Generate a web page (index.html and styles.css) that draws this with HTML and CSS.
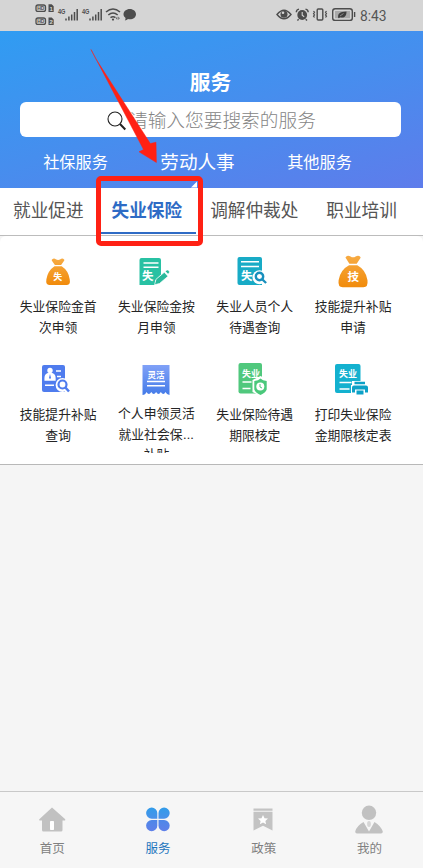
FILE: index.html
```html
<!DOCTYPE html>
<html lang="zh-CN">
<head>
<meta charset="utf-8">
<meta name="viewport" content="width=device-width, initial-scale=1">
<title>服务</title>
<link rel="stylesheet" href="styles.css">
</head>
<body>
<div class="status">
  <svg class="status-left" width="104" height="24" viewBox="34 2 104 24">
    <g fill="none" stroke="#4d4d4d" stroke-width="1.3">
      <rect x="36" y="5" width="9.5" height="6.4" rx="2"/>
      <rect x="36" y="18" width="9.5" height="6.4" rx="2"/>
    </g>
    <path d="M48.5 4.3h3.2l2 2v5.6h-5.2zM48.5 17.5h3.2l2 2v5.5h-5.2z" fill="#4d4d4d"/>
    <g class="tiny" fill="#4d4d4d">
      <text x="37.2" y="10.4" textLength="7.2" lengthAdjust="spacingAndGlyphs">HD</text><text x="37.2" y="23.4" textLength="7.2" lengthAdjust="spacingAndGlyphs">HD</text>
      <text class="network" x="58" y="13.8" textLength="7.500" lengthAdjust="spacingAndGlyphs">4G</text><text class="network" x="82" y="13.8" textLength="7.500" lengthAdjust="spacingAndGlyphs">4G</text>
    </g>
    <g class="tiny" fill="#d5d5d5"><text x="49.4" y="10.7">1</text><text x="49.4" y="23.7">2</text></g>
    <path d="M66 20.500v-2M68.900 20.500v-4M71.700 20.500v-6M74.500 20.500v-8.500M77.200 20.500v-11.500M90 20.500v-2M92.900 20.500v-4M95.700 20.500v-6M98.500 20.500v-8.500M101.200 20.500v-11.500" stroke="#4d4d4d" stroke-width="1.5"/>
    <g fill="none" stroke="#4d4d4d" stroke-width="1.5">
      <path d="M106 12q7-6 14 0M108.300 15q4.700-4 9.400 0M110.500 17.700q2.500-2 5 0"/>
    </g>
    <circle cx="113" cy="19.600" r="1.100" fill="#4d4d4d"/>
    <path d="M117.300 16.500l-1.300 1.700 1.300 1.700zM118.400 16.500l1.300 1.700-1.300 1.700z" fill="#4d4d4d"/>
    <path d="M129.800 9c3.500 0 6.200 2.300 6.200 5.300s-2.800 5-6 5c-.7 0-1.400 0-2-.3-.8.800-2.100 1.400-3.200 1.400.7-.8.900-1.800.6-2.600-1.200-.9-1.900-2.100-1.900-3.500 0-3 2.800-5.300 6.300-5.300z" fill="#4d4d4d"/>
  </svg>
  <svg class="status-right" width="80" height="18" viewBox="276 6 80 18">
    <path d="M277 14.500q7-8.500 14 0q-7 8.500-14 0z" fill="none" stroke="#4d4d4d" stroke-width="1.400"/>
    <circle cx="284" cy="14.300" r="3.500" fill="#4d4d4d"/><circle cx="283" cy="12.800" r="1.300" fill="#d5d5d5"/>
    <circle cx="302.200" cy="15" r="4.900" fill="#4d4d4d"/>
    <path d="M296.300 12.200q0-2.500 2.700-3.100M308.200 12.200q0-2.500-2.700-3.100M298.700 19.200l-1.300 1.300M305.700 19.200l1.300 1.300" stroke="#4d4d4d" stroke-width="1.400" fill="none"/>
    <path d="M302.200 12v3.200l2 1.500" stroke="#d5d5d5" stroke-width="1.100" fill="none"/>
    <rect x="317.200" y="9" width="5.600" height="11" rx="1" fill="none" stroke="#4d4d4d" stroke-width="1.400"/>
    <path d="M313.500 11l1 1.300-1 1.300 1 1.300-1 1.300 1 1.300M326.500 11l-1 1.300 1 1.300-1 1.300 1 1.300-1 1.300" stroke="#4d4d4d" stroke-width="1.200" fill="none"/>
    <rect x="332.700" y="8.800" width="19.600" height="11.600" rx="2.500" fill="none" stroke="#4d4d4d" stroke-width="1.400"/>
    <rect x="335" y="11" width="15" height="7.200" fill="#aaa"/>
    <path d="M354.600 12v5" stroke="#4d4d4d" stroke-width="1.400"/>
    <path d="M338.300 18c-.8-4.300 1.300-6.300 8.200-6.500 0 5-2.600 7-6.500 5.700l-1 1z" fill="#3f3f3f"/><path d="M340 16l3.500-2.500" stroke="#aaa" stroke-width=".7"/>
  </svg>
  <span class="clock">8:43</span>
</div>

<header class="hero">
  <h1>服务</h1>
  <div class="search">
    <svg width="20" height="20" viewBox="0 0 20 20" fill="none" stroke="#222"><circle cx="8" cy="8" r="7" stroke-width="1.100"/><path d="M13 13l5.300 5.500" stroke-width="2"/></svg>
    <span>请输入您要搜索的服务</span>
  </div>
  <nav class="groups"><span>社保服务</span><span class="current">劳动人事</span><span>其他服务</span></nav>
</header>

<nav class="tabs">
  <span>就业促进</span><span class="active">失业保险</span><span>调解仲裁处</span><span>职业培训</span>
</nav>

<main class="services">
  <a class="service">
    <svg viewBox="0 0 36 36"><defs><linearGradient id="bag" x1="0" y1="0" x2="0" y2="1"><stop offset="0" stop-color="#f7ab43"/><stop offset="1" stop-color="#f18b0b"/></linearGradient></defs>
      <path fill="url(#bag)" d="M12 5.500q2-2 3.800-.3q2.300 1.400 4.600 0q2-1.700 3.700.3q.6.500 0 1.200l-3 4.300h-6.200l-3-4.300q-.5-.7.100-1.200zM14.500 12.300h7.200q6.800 4.400 8 13q1 5.600-2.700 5.600H9.200q-3.700 0-2.800-5.600q1.400-8.600 8.100-13z"/>
      <text class="glyph nine" x="13.300" y="26">失</text></svg>
    <span class="label">失业保险金首次申领</span>
  </a>
  <a class="service">
    <svg viewBox="0 0 36 36"><path fill="#28c1a3" d="M3.500 4h17.500q2 0 2 2v14.500l-6 6v4.500h-15.500V6q0-2 2-2z"/><path d="M5.500 9h15M5.500 13.200h15" stroke="#fff" stroke-width="1.400"/><text class="glyph eleven" x="4" y="26">失</text>
      <path d="M16.500 30.800l1.500-5.500 8.300-7 3.700 4-8.500 7.200zM27.300 17.400l1.300-1.200q1.300-.8 2.300.4q1.300 1.500.1 2.700l-1 .9z" fill="#28b99b" stroke="#fff" stroke-width=".7"/></svg>
    <span class="label">失业保险金按月申领</span>
  </a>
  <a class="service">
    <svg viewBox="0 0 36 36"><path fill="#18abc6" d="M2.500 3H23q2 0 2 2v26H2.500q-2 0-2-2V5q0-2 2-2z"/><path d="M4 7.800h18M4 12.500h18" stroke="#fff" stroke-width="1.400"/><text class="glyph eleven" x="4" y="26">失</text>
      <circle cx="22.500" cy="23.300" r="7" fill="#fff"/><path d="M26 27l4 3.500" stroke="#fff" stroke-width="5"/><circle cx="22.500" cy="22.500" r="3.700" fill="none" stroke="#178fbd" stroke-width="2.400"/><path d="M25.400 25.500l3.700 3.500" stroke="#178fbd" stroke-width="2.400"/></svg>
    <span class="label">失业人员个人待遇查询</span>
  </a>
  <a class="service">
    <svg viewBox="0 0 36 36"><path fill="url(#bag)" d="M10.800 3q2-2.300 4.800-.5q2.400 1.700 5 0q3-1.700 4.800.5q.5.700-.1 1.300l-3.600 5.500h-7.300l-3.500-5.500q-.7-.6-.1-1.300zM14 11.300h8.300q8.700 4.700 10.200 15q.8 7-4.100 7H7.700q-5 0-4.100-7q1.500-10.300 10.400-15z"/>
      <text class="glyph eleven" x="12.500" y="27">技</text></svg>
    <span class="label">技能提升补贴申请</span>
  </a>
  <a class="service">
    <svg viewBox="0 0 36 36"><path fill="#4f7cee" d="M4 4h19q2 0 2 2v25H4q-2 0-2-2V6q0-2 2-2z"/><circle cx="10" cy="9.500" r="2.700" fill="#fff"/><path d="M5.200 19v-2q0-3.700 3.500-4.500h2.700q3.500.8 3.500 4.500v2zM16 10h5M17 15.500h4M5 24.200h9" fill="#fff" stroke="#fff" stroke-width="1.500"/><path d="M10 13l-1 4 1 1 1-1z" fill="#4f7cee"/>
      <circle cx="22.500" cy="24" r="6.900" fill="#fff"/><circle cx="22.500" cy="23.500" r="4" fill="none" stroke="#4f7cee" stroke-width="2.200"/><path d="M25.400 26.500l3.600 4" stroke="#4f7cee" stroke-width="2.500"/></svg>
    <span class="label">技能提升补贴查询</span>
  </a>
  <a class="service">
    <svg viewBox="0 0 36 36"><defs><linearGradient id="bill" x1="0" y1="0" x2="0" y2="1"><stop offset="0" stop-color="#80a1f7"/><stop offset="1" stop-color="#447be8"/></linearGradient></defs><path fill="url(#bill)" d="M4.500 4h27v30q-2.500 0-4-3q-2 4-4.700 0q-2.300 4-4.700 0q-2.400 4-4.800 0q-2.500 4-4.800 0q-1.200 3-4 3z"/><text class="glyph eight" x="9.500" y="16.500">灵活</text><path d="M9 20.500h18M9 24.700h18" stroke="#fff" stroke-width="1.500"/></svg>
    <span class="label clipped">个人申领灵活<br>就业社会保<span class="dots">…</span><br>补贴</span>
  </a>
  <a class="service">
    <svg viewBox="0 0 36 36"><path fill="#50c87d" d="M3.500 2H23q2 0 2 2v28.500H3.500q-2 0-2-2V4q0-2 2-2z"/><text class="glyph nine" x="5" y="15.500">失业</text><path d="M5.500 21h9M5.500 27.500h8" stroke="#fff" stroke-width="1.500"/>
      <path d="M23.500 15l8 4v12l-8 4-8-4V19z" fill="#fff"/><path d="M23.500 17.500q2 2 6.200 2.500v8.500q-1 3-6.200 5.500q-5.200-2.500-6.200-5.500V20q4.200-.5 6.200-2.500z" fill="#4ac87b"/><circle cx="23.300" cy="25.500" r="4" fill="#fff"/><path d="M23 23v3l2 1" fill="none" stroke="#4ac87b"/></svg>
    <span class="label">失业保险待遇期限核定</span>
  </a>
  <a class="service">
    <svg viewBox="0 0 36 36"><path fill="#13b1cf" d="M2 3h21.500q2 0 2 2v27H2q-2 0-2-2V5q0-2 2-2z"/><text class="glyph nine" x="4" y="16">失业</text><path d="M4.500 21.500h12M4.500 28h10" stroke="#fff" stroke-width="1.500"/><path d="M17 20h15v4h2v10H16V24h1z" fill="#fff"/><path d="M19.500 20.800h10.500v2.400H19.500zM19 24.500h12q2 0 2 2v5h-3v-3H20v3h-3v-5q0-2 2-2zM21.500 29.500h7v4h-7z" fill="#0ca1c7"/></svg>
    <span class="label">打印失业保险金期限核定表</span>
  </a>
</main>

<nav class="bottom">
  <a><svg viewBox="0 0 32 32"><path d="M16 3.500L29 15q1 1.500-1 1.500h-1.500V26q0 1.500-1.500 1.500H7.500Q6 27.500 6 26v-9.500H4q-1.500 0-.7-1.300z" fill="#c1c1c1"/><rect x="14" y="17" width="4" height="9" rx=".7" fill="#fff"/></svg><span>首页</span></a>
  <a class="selected"><svg viewBox="0 0 32 32"><defs><linearGradient id="petal" x1="0" y1="0" x2="0" y2="1" ><stop offset="0" stop-color="#319ce9"/><stop offset="1" stop-color="#4991ea"/></linearGradient><linearGradient id="petal-low" x1="0" y1="0" x2="0" y2="1"><stop offset="0" stop-color="#4e87e8"/><stop offset="1" stop-color="#6080e9"/></linearGradient></defs><path fill="url(#petal)" d="M9.700 3.500a5.600 5.600 0 0 1 5.600 5.600v5.600H9.700a5.600 5.600 0 0 1 0-11.200zM22.100 3.500a5.600 5.600 0 0 1 0 11.200h-5.600V9.100a5.600 5.600 0 0 1 5.600-5.600z"/><path fill="url(#petal-low)" d="M9.700 16h5.600v5.700A5.600 5.600 0 1 1 9.700 16zM16.500 16h5.600a5.600 5.600 0 1 1-5.600 5.700z"/></svg><span>服务</span></a>
  <a><svg viewBox="0 0 32 32"><path d="M6.500 4.500h19v2.300h-19zM6.500 7.700h19V26.500L16 21.800l-9.500 4.700z" fill="#c3c3c3"/><path d="M16 11l1.500 3.200 3.500.4-2.600 2.300.7 3.400-3.100-1.700-3.100 1.700.7-3.400-2.600-2.300 3.500-.4z" fill="#fff"/></svg><span>政策</span></a>
  <a><svg viewBox="0 0 32 32"><circle cx="16" cy="8.800" r="7.200" fill="#c1c1c1"/><path d="M10.500 18l5.500 9.500L21.500 18q6.500 4 8.300 9.500 0 2-1.800 2H4q-1.800 0-1.800-2Q3.500 22 10.500 18z" fill="#c1c1c1"/><ellipse cx="16" cy="20" rx="1.900" ry="3" fill="#d6d6d6"/></svg><span>我的</span></a>
</nav>

<svg class="callout" viewBox="0 0 423 868">
  <path d="M191 187.500l6-6v6z" fill="#fff"/>
  <rect x="98.500" y="178.500" width="102" height="65" rx="2.500" fill="none" stroke="#ff2114" stroke-width="5"/>
  <path d="M91 49.500L96 59L150.300 143.500l5.700-1.300.4 20.300L139 151.800l4.500-2.300z" fill="#ff2114" stroke="#ff2114" stroke-width=".5"/>
</svg>
</body>
</html>
```
FILE: styles.css
```css
* { box-sizing: border-box; }
body {
  margin: 0;
  width: 423px;
  height: 868px;
  display: flex;
  flex-direction: column;
  overflow: hidden;
  position: relative;
  background: #f5f5f5;
  font-family: Roboto, "Noto Sans CJK SC", sans-serif;
}
svg { display: block; flex: none; }

.status {
  height: 31px;
  flex: none;
  display: flex;
  align-items: flex-start;
  background: #d5d5d5;
  color: #555;
}
.status-left { margin: 2px 0 0 34px; }
.status-right { margin: 6px 0 0 138px; }
.clock { margin: 7px 0 0 4px; font-size: 13.8px; line-height: 18px; }
.tiny { font: bold 6px "Liberation Sans", sans-serif; }
.network { font-size: 7.5px; }

.hero {
  height: 157px;
  flex: none;
  padding: 37px 22px 0 20px;
  background: linear-gradient(165deg, #309cf2 0%, #468eee 50%, #5e7ceb 100%);
  color: #fff;
}
.hero h1 {
  margin: 0;
  font-size: 20.7px;
  line-height: 31px;
  height: 34px;
  font-weight: 700;
  text-align: center;
}
.search {
  height: 35px;
  display: flex;
  align-items: center;
  gap: 2px;
  padding-left: 87px;
  border-radius: 6px;
  background: #fff;
  color: #858585;
  font-size: 18.7px;
  font-weight: 300;
  line-height: 35px;
  white-space: nowrap;
}
.search svg { margin-top: 3px; }
.search span { padding-top: 4px; }
.groups {
  display: grid;
  grid-template-columns: 111px 133px 111px;
  height: 52px;
  line-height: 52px;
  font-size: 16.2px;
  text-align: center;
}
.groups .current { font-size: 18.6px; }

.tabs {
  height: 48px;
  flex: none;
  display: flex;
  gap: 28px;
  padding-left: 13px;
  border-bottom: 1.500px solid #bcbcbc;
  background: #fff;
  color: #555;
  font-size: 17.65px;
  line-height: 47px;
  white-space: nowrap;
}
.tabs .active {
  height: 46px;
  margin: 0 -14px 0 -11px;
  padding: 0 14px 0 11px;
  border-bottom: 2.500px solid #2e6bc5;
  color: #2e6bc5;
  font-weight: 700;
}

.services {
  height: 229px;
  flex: none;
  display: grid;
  grid-template-columns: repeat(4, 98.3px);
  grid-template-rows: 107px 108px;
  padding: 18px 0 0 9px;
  border-bottom: 1px solid #b8b8b8;
  border-radius: 6px 6px 0 0;
  background: #fff;
}
.service { display: flex; flex-direction: column; align-items: center; }
.service svg { width: 36px; height: 36px; }
.label {
  width: 78px;
  height: 54px;
  margin-top: 6px;
  color: #252525;
  font-size: 12.8px;
  line-height: 21px;
  text-align: center;
}
.service:nth-child(n+5) .label { margin-top: 7px; }
.service .clipped { height: 49px; overflow: hidden; line-height: 20.6px; white-space: nowrap; }
.dots { font-size: 18.5px; font-weight: 300; line-height: 0; }
.glyph { fill: #fff; font-weight: 700; }
.eight { font-size: 8.5px; }
.nine { font-size: 9px; }
.eleven { font-size: 11.5px; }

.bottom {
  height: 77px;
  flex: none;
  display: grid;
  grid-template-columns: repeat(4, 105.7px);
  margin-top: auto;
  padding-top: 12px;
  border-top: 1.500px solid #c9c9c9;
  background: #f6f6f6;
  color: #808080;
  font-size: 12.5px;
  line-height: 20px;
}
.bottom a { display: flex; flex-direction: column; align-items: center; gap: 3px; }
.bottom svg { width: 32px; height: 32px; margin-left: -2px; }
.bottom span { margin-left: -1px; }
.bottom .selected { color: #1d75bd; }

.callout { position: absolute; inset: 0; width: 423px; height: 868px; pointer-events: none; }
```
